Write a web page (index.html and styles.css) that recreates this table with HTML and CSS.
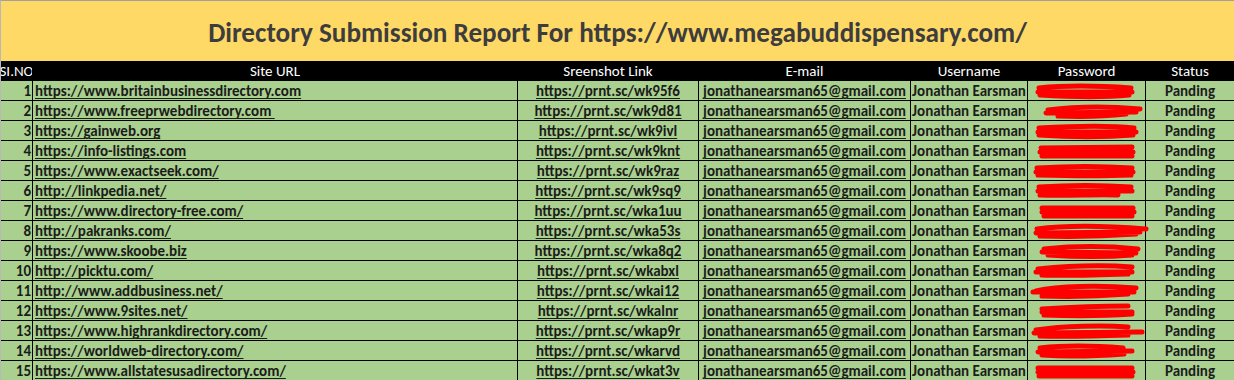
FILE: index.html
```html
<!DOCTYPE html>
<html>
<head>
<meta charset="utf-8">
<link rel="stylesheet" href="styles.css">
</head>
<body>
<div class="sheet">
  <div class="title">Directory Submission Report For https://www.megabuddispensary.com/</div>
  <div class="grid">
    <div class="row head">
      <div class="c no">SI.NO</div>
      <div class="c">Site URL</div>
      <div class="c">Sreenshot Link</div>
      <div class="c">E-mail</div>
      <div class="c">Username</div>
      <div class="c">Password</div>
      <div class="c">Status</div>
    </div>

    <div class="row">
      <div class="c num">1</div><div class="c url"><u>https://www.britainbusinessdirectory.com</u></div><div class="c mid"><u>https://prnt.sc/wk95f6</u></div><div class="c mid"><u>jonathanearsman65@gmail.com</u></div><div class="c mid">Jonathan Earsman</div>
      <div class="c pw"><svg viewBox="0 0 117 19" width="117" height="19"><path d="M11 7 C40 4 75 5 103 7 M10 11 L104 11 M12 14 C45 16 80 16 101 14"/></svg></div><div class="c mid">Panding</div>
    </div>
    <div class="row">
      <div class="c num">2</div><div class="c url"><u>https://www.freeprwebdirectory.com&nbsp;</u></div><div class="c mid"><u>https://prnt.sc/wk9d81</u></div><div class="c mid"><u>jonathanearsman65@gmail.com</u></div><div class="c mid">Jonathan Earsman</div>
      <div class="c pw"><svg viewBox="0 0 117 19" width="117" height="19"><path d="M20 9 C50 5 80 5 112 8 M18 12 L108 11 M30 15 C55 16 80 15 98 13"/></svg></div><div class="c mid">Panding</div>
    </div>
    <div class="row">
      <div class="c num">3</div><div class="c url"><u>https://gainweb.org</u></div><div class="c mid"><u>https://prnt.sc/wk9ivl</u></div><div class="c mid"><u>jonathanearsman65@gmail.com</u></div><div class="c mid">Jonathan Earsman</div>
      <div class="c pw"><svg viewBox="0 0 117 19" width="117" height="19"><path d="M11 7 C45 5 80 4 106 7 M10 11 L108 11 M11 14 C40 16 80 16 105 14"/></svg></div><div class="c mid">Panding</div>
    </div>
    <div class="row">
      <div class="c num">4</div><div class="c url"><u>https://info-listings.com</u></div><div class="c mid"><u>https://prnt.sc/wk9knt</u></div><div class="c mid"><u>jonathanearsman65@gmail.com</u></div><div class="c mid">Jonathan Earsman</div>
      <div class="c pw"><svg viewBox="0 0 117 19" width="117" height="19"><path d="M13 7 L104 6 M12 11 L105 11 M14 15 L104 15"/></svg></div><div class="c mid">Panding</div>
    </div>
    <div class="row">
      <div class="c num">5</div><div class="c url"><u>https://www.exactseek.com/</u></div><div class="c mid"><u>https://prnt.sc/wk9raz</u></div><div class="c mid"><u>jonathanearsman65@gmail.com</u></div><div class="c mid">Jonathan Earsman</div>
      <div class="c pw"><svg viewBox="0 0 117 19" width="117" height="19"><path d="M9 7 C40 5 75 5 104 7 M8 11 L105 11 M10 14 C45 15 80 15 103 14"/></svg></div><div class="c mid">Panding</div>
    </div>
    <div class="row">
      <div class="c num">6</div><div class="c url"><u>http://linkpedia.net/</u></div><div class="c mid"><u>https://prnt.sc/wk9sq9</u></div><div class="c mid"><u>jonathanearsman65@gmail.com</u></div><div class="c mid">Jonathan Earsman</div>
      <div class="c pw"><svg viewBox="0 0 117 19" width="117" height="19"><path d="M11 6 C40 4 75 4 103 6 M10 10 L104 10 M12 14 C40 15 70 13 90 14"/></svg></div><div class="c mid">Panding</div>
    </div>
    <div class="row">
      <div class="c num">7</div><div class="c url"><u>https://www.directory-free.com/</u></div><div class="c mid"><u>https://prnt.sc/wka1uu</u></div><div class="c mid"><u>jonathanearsman65@gmail.com</u></div><div class="c mid">Jonathan Earsman</div>
      <div class="c pw"><svg viewBox="0 0 117 19" width="117" height="19"><path d="M14 7 L105 7 M14 11 L106 11 M16 15 L104 15"/></svg></div><div class="c mid">Panding</div>
    </div>
    <div class="row">
      <div class="c num">8</div><div class="c url"><u>http://pakranks.com/</u></div><div class="c mid"><u>https://prnt.sc/wka53s</u></div><div class="c mid"><u>jonathanearsman65@gmail.com</u></div><div class="c mid">Jonathan Earsman</div>
      <div class="c pw"><svg viewBox="0 0 117 19" width="117" height="19"><path d="M9 8 C40 4 80 5 118 8 M8 12 L112 11 M12 15 C45 16 80 15 108 13"/></svg></div><div class="c mid">Panding</div>
    </div>
    <div class="row">
      <div class="c num">9</div><div class="c url"><u>https://www.skoobe.biz</u></div><div class="c mid"><u>https://prnt.sc/wka8q2</u></div><div class="c mid"><u>jonathanearsman65@gmail.com</u></div><div class="c mid">Jonathan Earsman</div>
      <div class="c pw"><svg viewBox="0 0 117 19" width="117" height="19"><path d="M16 8 C45 5 80 5 110 8 M14 11 L108 12 M20 14 C50 16 80 16 104 14"/></svg></div><div class="c mid">Panding</div>
    </div>
    <div class="row">
      <div class="c num">10</div><div class="c url"><u>http://picktu.com/</u></div><div class="c mid"><u>https://prnt.sc/wkabxl</u></div><div class="c mid"><u>jonathanearsman65@gmail.com</u></div><div class="c mid">Jonathan Earsman</div>
      <div class="c pw"><svg viewBox="0 0 117 19" width="117" height="19"><path d="M10 8 C40 5 75 4 104 6 M8 11 L104 11 M14 14 C40 15 70 14 100 13"/></svg></div><div class="c mid">Panding</div>
    </div>
    <div class="row">
      <div class="c num">11</div><div class="c url"><u>http://www.addbusiness.net/</u></div><div class="c mid"><u>https://prnt.sc/wkai12</u></div><div class="c mid"><u>jonathanearsman65@gmail.com</u></div><div class="c mid">Jonathan Earsman</div>
      <div class="c pw"><svg viewBox="0 0 117 19" width="117" height="19"><path d="M8 10 C30 5 70 4 108 7 M5 11 L106 11 M14 15 C40 16 75 15 100 13"/></svg></div><div class="c mid">Panding</div>
    </div>
    <div class="row">
      <div class="c num">12</div><div class="c url"><u>https://www.9sites.net/</u></div><div class="c mid"><u>https://prnt.sc/wkalnr</u></div><div class="c mid"><u>jonathanearsman65@gmail.com</u></div><div class="c mid">Jonathan Earsman</div>
      <div class="c pw"><svg viewBox="0 0 117 19" width="117" height="19"><path d="M14 8 C45 6 70 5 100 5 M14 11 L104 11 M16 14 C45 15 75 15 104 13"/></svg></div><div class="c mid">Panding</div>
    </div>
    <div class="row">
      <div class="c num">13</div><div class="c url"><u>https://www.highrankdirectory.com/</u></div><div class="c mid"><u>https://prnt.sc/wkap9r</u></div><div class="c mid"><u>jonathanearsman65@gmail.com</u></div><div class="c mid">Jonathan Earsman</div>
      <div class="c pw"><svg viewBox="0 0 117 19" width="117" height="19"><path d="M8 9 C35 5 75 4 100 6 M6 12 L114 11 M12 15 C40 16 70 15 100 14"/></svg></div><div class="c mid">Panding</div>
    </div>
    <div class="row">
      <div class="c num">14</div><div class="c url"><u>https://worldweb-directory.com/</u></div><div class="c mid"><u>https://prnt.sc/wkarvd</u></div><div class="c mid"><u>jonathanearsman65@gmail.com</u></div><div class="c mid">Jonathan Earsman</div>
      <div class="c pw"><svg viewBox="0 0 117 19" width="117" height="19"><path d="M12 7 C40 4 70 5 95 7 M10 11 L104 10 M14 14 C40 16 70 15 96 13"/></svg></div><div class="c mid">Panding</div>
    </div>
    <div class="row">
      <div class="c num">15</div><div class="c url"><u>https://www.allstatesusadirectory.com/</u></div><div class="c mid"><u>https://prnt.sc/wkat3v</u></div><div class="c mid"><u>jonathanearsman65@gmail.com</u></div><div class="c mid">Jonathan Earsman</div>
      <div class="c pw"><svg viewBox="0 0 117 19" width="117" height="19"><path d="M10 7 L104 7 M10 11 L105 11 M11 15 L104 15"/></svg></div><div class="c mid">Panding</div>
    </div>
  </div>
</div>
</body>
</html>
```

FILE: styles.css
```css
html, body {
  margin: 0;
  padding: 0;
  background: #ffffff;
}
body {
  font-family: Carlito, Lato, "Liberation Sans", sans-serif;
  overflow: hidden;
}
.sheet {
  width: 1233px;
  border-left: 1px solid #b8b8b8;
  border-top: 1px solid #a0a0a0;
}
.title {
  height: 60px;
  background: #ffd966;
  display: flex;
  align-items: center;
  justify-content: center;
  font-size: 27.2px;
  font-weight: 700;
  color: #3d3d3d;
  padding-top: 3px;
  box-sizing: border-box;
}
.grid {
  display: grid;
  grid-template-columns: 31px 484px 180px 211px 116px 117px 88px;
  grid-auto-rows: 19px;
  gap: 1px;
  background: #000000;
}
.row {
  display: contents;
}
.c {
  background: #a9d08e;
  font-size: 15px;
  font-weight: 700;
  color: #1c1c1c;
  line-height: 19px;
  white-space: nowrap;
  overflow: visible;
  display: flex;
  align-items: center;
  padding-top: 2px;
  box-sizing: border-box;
}
.head .c {
  background: #000000;
  color: #ffffff;
  font-weight: 400;
  justify-content: center;
  height: 20px;
  margin-bottom: -1px;
  padding-top: 1px;
}
.head .c.no {
  overflow: hidden;
}
.num {
  justify-content: flex-end;
  padding-right: 1px;
}
.url {
  padding-left: 2px;
}
.mid {
  justify-content: center;
}
u {
  text-decoration-thickness: 1px;
  text-underline-offset: 2px;
}
.pw {
  position: relative;
  overflow: visible;
  z-index: 1;
  padding-top: 0;
}
.pw svg {
  display: block;
  overflow: visible;
}
.pw path {
  fill: none;
  stroke: #ff0000;
  stroke-width: 5;
  stroke-linecap: round;
  stroke-linejoin: round;
}
```
